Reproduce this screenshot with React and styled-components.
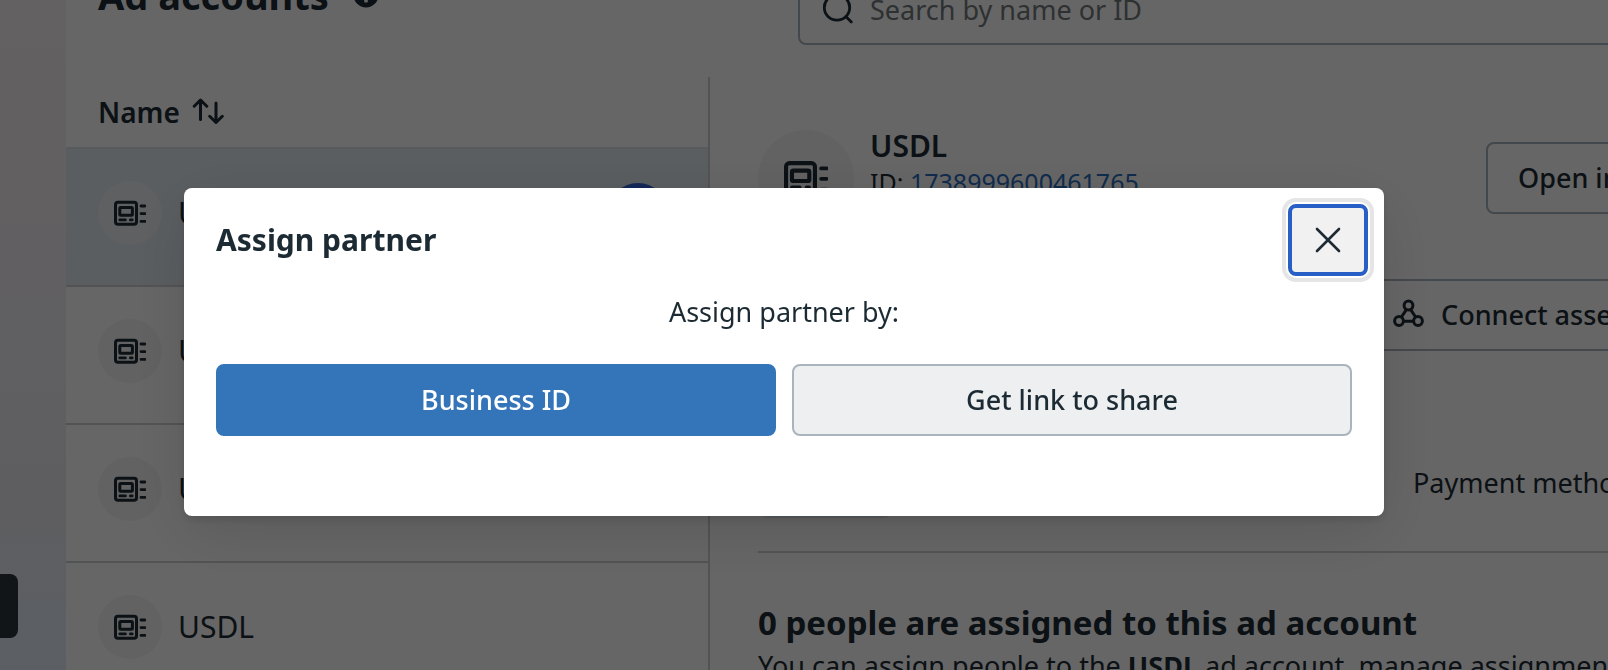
import React, {useState} from 'react';
import styled, {createGlobalStyle} from 'styled-components';

const accounts = [
	{id: 1, name: 'USDL'},
	{id: 2, name: 'USDL'},
	{id: 3, name: 'USDL'},
	{id: 4, name: 'USDL'},
];

const AccountIcon = ({size}) => (
	<svg width={size} height={size} viewBox="0 0 32 32" fill="none" stroke="#1c2b33" aria-hidden="true">
		<rect x="1.5" y="5.2" width="21" height="22" rx="2.5" strokeWidth="3" />
		<rect x="5.8" y="10.6" width="12.6" height="7.6" rx="1" strokeWidth="3" />
		<path d="M5.8 22.9h5.6M16.4 22.9h1.8M27 9h4M27 16.6h4M27 24.4h4" strokeWidth="2.8" strokeLinecap="round" />
	</svg>
)

const SortIcon = () => (
	<svg width="32" height="28" viewBox="0 0 32 28" fill="none" stroke="#1c2b33" strokeWidth="3" strokeLinecap="round" strokeLinejoin="round" aria-hidden="true">
		<path d="M8.5 21.5V2.5M2.2 8.2l6.3-6.2 6.3 6.2M24 5v19M17.7 18.3l6.3 6.2 6.3-6.2" />
	</svg>
)

const InfoIcon = () => (
	<svg width="26" height="26" viewBox="0 0 26 26" aria-hidden="true">
		<circle cx="13" cy="13" r="12.5" fill="#1c2b33" />
		<circle cx="13" cy="7.4" r="2" fill="#fff" />
		<rect x="11.2" y="11" width="3.6" height="9.5" rx="1" fill="#fff" />
	</svg>
)

const SearchIcon = () => (
	<svg width="32" height="32" viewBox="0 0 32 32" fill="none" stroke="#1c2b33" strokeWidth="2.8" strokeLinecap="round" aria-hidden="true">
		<circle cx="15" cy="14.5" r="12.7" />
		<path d="M24.3 24l5 5" />
	</svg>
)

const ConnectIcon = () => (
	<svg width="32" height="32" viewBox="0 0 32 32" fill="none" stroke="#1c2b33" strokeWidth="3" aria-hidden="true">
		<circle cx="15.5" cy="6.5" r="4.4" />
		<circle cx="6" cy="22" r="4.4" />
		<circle cx="25" cy="22" r="4.4" />
		<path d="M13.4 10.6L8.4 18M17.6 10.6l5 7.4M10.6 22.2h9.8" />
	</svg>
)

const CloseIcon = () => (
	<svg width="26" height="26" viewBox="0 0 26 26" fill="none" stroke="#1c2b33" strokeWidth="2.6" strokeLinecap="round" aria-hidden="true">
		<path d="M2 2l22 22M24 2L2 24" />
	</svg>
)

const AssignPartnerModal = ({onClose}) => (
	<Overlay>
		<Dialog role="dialog" aria-modal="true" aria-labelledby="assign-title">
			<DialogHeader>
				<DialogTitle id="assign-title">Assign partner</DialogTitle>
				<CloseButton type="button" aria-label="Close" onClick={onClose}>
					<CloseIcon />
				</CloseButton>
			</DialogHeader>
			<DialogText>Assign partner by:</DialogText>
			<DialogActions>
				<ActionButton type="button" $primary>Business ID</ActionButton>
				<ActionButton type="button">Get link to share</ActionButton>
			</DialogActions>
		</Dialog>
	</Overlay>
)

const App = () => {
	const [open, setOpen] = useState(true);
	const [selected, setSelected] = useState(1);

	return (
		<>
			<GlobalStyle />
			<Page>
				<Sidebar>
					<SidebarButton type="button" aria-label="Help" />
				</Sidebar>
				<Main>
					<TopBar>
						<PageTitle>Ad accounts <InfoIcon /></PageTitle>
						<SearchBox>
							<SearchIcon />
							<SearchInput type="text" aria-label="Search by name or ID" placeholder="Search by name or ID" />
						</SearchBox>
					</TopBar>
					<Columns>
						<ListColumn>
							<ListHeader type="button">Name <SortIcon /></ListHeader>
							<List>
								{accounts.map(account => (
									<li key={account.id}>
										<Row type="button" $active={account.id === selected} onClick={() => setSelected(account.id)}>
											<Avatar $size={64} $light={account.id === selected}><AccountIcon size={32} /></Avatar>
											<RowName>{account.name}</RowName>
											{account.id === selected && <SelectedMark />}
										</Row>
									</li>
								))}
							</List>
						</ListColumn>
						<Detail>
							<DetailHeader>
								<Avatar $size={96}><AccountIcon size={44} /></Avatar>
								<DetailInfo>
									<DetailName>USDL</DetailName>
									<DetailId>ID: <a href="#account">1738999600461765</a></DetailId>
								</DetailInfo>
								<OutlineButton type="button">Open in</OutlineButton>
							</DetailHeader>
							<ButtonBar>
								<OutlineButton type="button"><ConnectIcon />Connect assets</OutlineButton>
							</ButtonBar>
							<Facts>
								<Tag />
								<span>Payment method</span>
							</Facts>
							<People>
								<h2>0 people are assigned to this ad account</h2>
								<p>You can assign people to the <b>USDL</b> ad account, manage assignments</p>
							</People>
						</Detail>
					</Columns>
				</Main>
			</Page>
			{open && <AssignPartnerModal onClose={() => setOpen(false)} />}
		</>
	)
}

export default App;

const GlobalStyle = createGlobalStyle`
  * {
    box-sizing: border-box;
  }
  body {
    margin: 0;
    color: #1c2b33;
    font-family: "Noto Sans", "Open Sans", sans-serif;
    font-size: 27px;
    line-height: 40px;
  }
  button, input {
    font: inherit;
    color: inherit;
  }
  h1, h2, h3, p, ul {
    margin: 0;
    padding: 0;
  }
  svg {
    flex: none;
  }
`

const Page = styled.div`
  display: flex;
  height: 100vh;
  overflow: hidden;
  background: linear-gradient(#faf2f4, #f0edf2 50%, #ebecf2 75%, #e4edf9);
`

const Sidebar = styled.aside`
  flex: none;
  display: flex;
  align-items: flex-end;
  width: 66px;
  padding-bottom: 32px;
`

const SidebarButton = styled.button`
  width: 18px;
  height: 64px;
  border: 0;
  border-radius: 0 8px 8px 0;
  background: #2c363b;
`

const Main = styled.main`
  flex: 1;
  min-width: 0;
  background: #fff;
`

/* scrolled partly out of view */
const TopBar = styled.header`
  display: flex;
  justify-content: space-between;
  margin-top: -27px;
  padding-left: 32px;
`

const PageTitle = styled.h1`
  display: flex;
  align-items: center;
  gap: 24px;
  height: 44px;
  font-size: 38px;
  font-weight: 700;
`

const SearchBox = styled.div`
  display: flex;
  align-items: center;
  gap: 16px;
  width: 840px;
  height: 72px;
  margin-right: -30px;
  padding-left: 22px;
  border: 2px solid #a9b4bd;
  border-radius: 8px;
`

const SearchInput = styled.input`
  flex: 1;
  padding: 2px 0 0;
  border: 0;
  outline: 0;
  background: none;
  &::placeholder {
    color: #737a7e;
    opacity: 1;
  }
`

const Columns = styled.div`
  display: flex;
  align-items: stretch;
  height: 100%;
  margin-top: 32px;
`

const ListColumn = styled.section`
  flex: none;
  width: 644px;
  border-right: 2px solid #ced0d4;
`

const ListHeader = styled.button`
  display: flex;
  align-items: center;
  gap: 12px;
  width: 100%;
  height: 72px;
  padding: 0 32px;
  border: 0;
  border-bottom: 2px solid #dde3e8;
  background: none;
  font-size: 28px;
  font-weight: 600;
`

const List = styled.ul`
  list-style: none;
`

const Row = styled.button`
  display: flex;
  align-items: center;
  gap: 16px;
  width: 100%;
  padding: 32px 40px 40px 32px;
  border: 0;
  border-bottom: 2px solid #cbd0d5;
  background: ${props => props.$active ? '#e2ebf3' : 'none'};
  text-align: left;
`

const Avatar = styled.span`
  flex: none;
  display: flex;
  align-items: center;
  justify-content: center;
  width: ${props => props.$size}px;
  height: ${props => props.$size}px;
  border-radius: 50%;
  background: ${props => props.$light ? '#ebf0f4' : '#f4f4f7'};
`

const RowName = styled.span`
  flex: 1;
  font-size: 30px;
`

const SelectedMark = styled.span`
  width: 60px;
  height: 60px;
  border-radius: 50%;
  background: #3264d8;
`

const Detail = styled.section`
  flex: 1;
  min-width: 0;
  padding: 53px 0 0 48px;
  white-space: nowrap;
  overflow: hidden;
`

const DetailHeader = styled.div`
  display: flex;
  align-items: center;
  margin-right: -160px;
`

const DetailInfo = styled.div`
  flex: 1;
  align-self: flex-start;
  padding-left: 16px;
`

const DetailName = styled.h3`
  font-size: 30px;
  font-weight: 600;
  line-height: 32px;
`

const DetailId = styled.p`
  font-size: 25px;
  a {
    color: #2b6fc0;
    text-decoration: none;
  }
`

const OutlineButton = styled.button`
  flex: none;
  display: flex;
  align-items: center;
  gap: 16px;
  width: 282px;
  height: 72px;
  padding: 0 30px;
  border: 2px solid #a9b4bd;
  border-radius: 8px;
  background: none;
  font-weight: 500;
`

const ButtonBar = styled.div`
  display: flex;
  justify-content: flex-end;
  margin-right: -35px;
  padding-top: 53px;
`

const Facts = styled.div`
  display: flex;
  align-items: flex-end;
  justify-content: space-between;
  height: 202px;
  padding-bottom: 33px;
  border-bottom: 2px solid #ced0d4;
  span:last-child {
    width: 195px;
    padding-bottom: 15px;
  }
`

const Tag = styled.span`
  width: 132px;
  height: 40px;
  margin-left: 2px;
  border-radius: 8px;
  background: #e2ebf3;
`

const People = styled.div`
  padding-top: 47px;
  h2 {
    font-size: 33px;
    font-weight: 700;
    line-height: 46px;
  }
`

const Overlay = styled.div`
  position: fixed;
  inset: 0;
  display: flex;
  align-items: flex-start;
  justify-content: center;
  padding: 188px 40px 0 0;
  background: rgba(0, 0, 0, .6);
`

const Dialog = styled.div`
  width: 1200px;
  max-width: 100%;
  padding: 16px 32px 80px;
  border-radius: 8px;
  background: #fff;
  box-shadow: 0 4px 8px rgba(0, 0, 0, .12), 0 16px 64px rgba(0, 0, 0, .12);
`

const DialogHeader = styled.div`
  display: flex;
  align-items: center;
  justify-content: space-between;
  margin-right: -16px;
`

const DialogTitle = styled.h2`
  font-size: 30px;
  font-weight: 700;
`

const CloseButton = styled.button`
  display: flex;
  align-items: center;
  justify-content: center;
  width: 80px;
  height: 72px;
  padding: 0;
  border: 4px solid #285fc6;
  border-radius: 8px;
  background: #f1f1f1;
  box-shadow: 0 0 0 2px #fff, 0 0 0 6px #e5e5e5;
`

const DialogText = styled.p`
  padding: 16px 0 32px;
  text-align: center;
`

const DialogActions = styled.div`
  display: flex;
  gap: 16px;
`

const ActionButton = styled.button`
  flex: 1;
  height: 72px;
  border: 2px solid ${props => props.$primary ? '#3475b9' : '#a9b4bf'};
  border-radius: 8px;
  background: ${props => props.$primary ? '#3475b9' : '#eeeff1'};
  color: ${props => props.$primary ? '#fff' : '#1c2b33'};
  font-weight: 500;
`
